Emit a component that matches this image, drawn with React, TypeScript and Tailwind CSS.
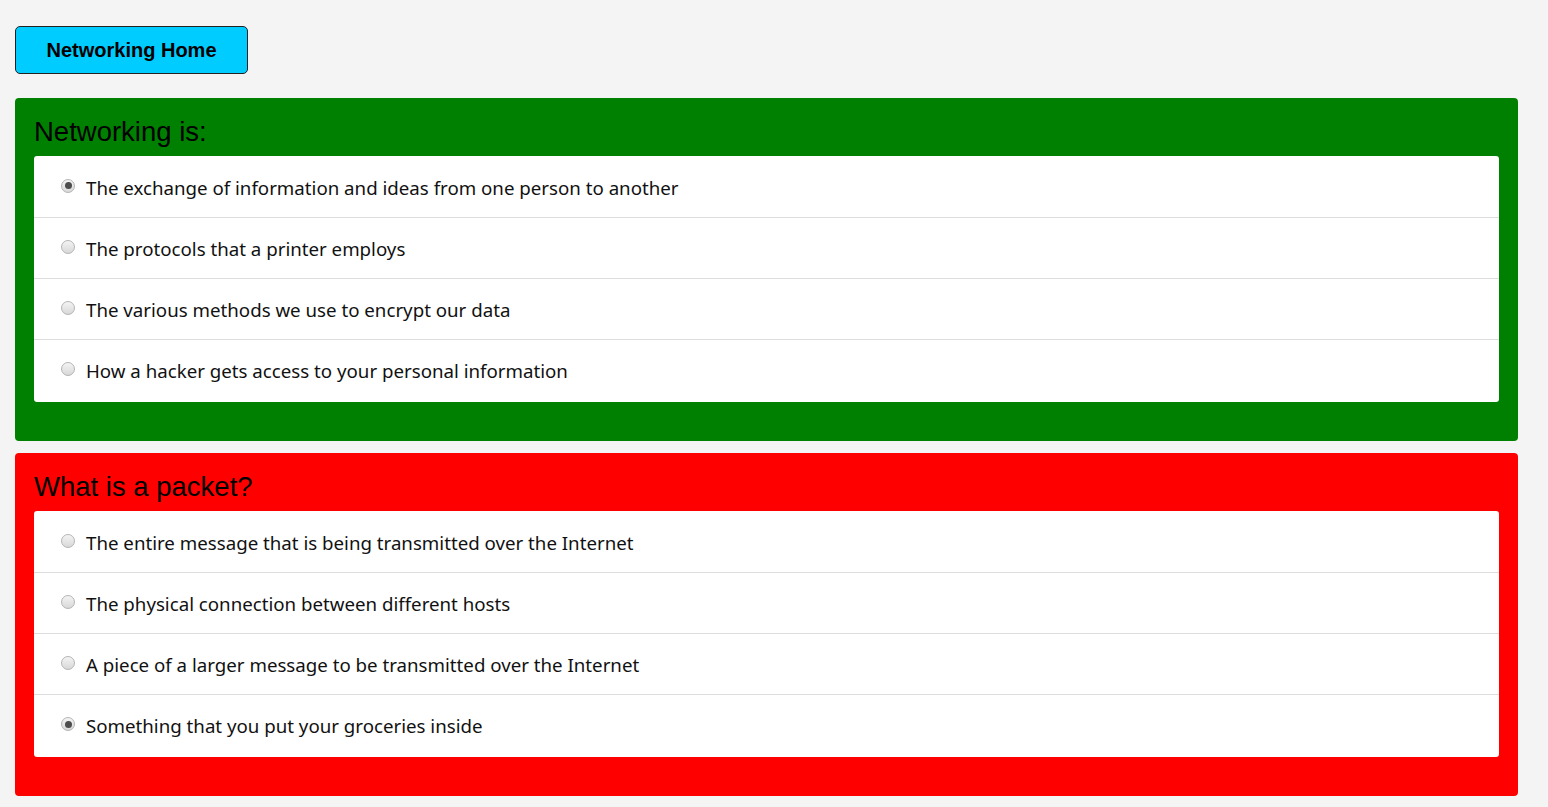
import { useState } from 'react';

interface Question {
  title: string;
  options: string[];
  selected: number;
  color: string;
}

const questions: Question[] = [
  {
    title: 'Networking is:',
    options: [
      'The exchange of information and ideas from one person to another',
      'The protocols that a printer employs',
      'The various methods we use to encrypt our data',
      'How a hacker gets access to your personal information',
    ],
    selected: 0,
    color: 'bg-[#008000]',
  },
  {
    title: 'What is a packet?',
    options: [
      'The entire message that is being transmitted over the Internet',
      'The physical connection between different hosts',
      'A piece of a larger message to be transmitted over the Internet',
      'Something that you put your groceries inside',
    ],
    selected: 3,
    color: 'bg-[#ff0000]',
  },
];

const Radio = ({ checked }: { checked: boolean }) => (
  <span className="flex h-[14px] w-[14px] shrink-0 items-center justify-center rounded-full border border-[#b4b4b4] bg-gradient-to-b from-[#f4f4f4] to-[#d8d8d8]">
    {checked && <span className="h-[7px] w-[7px] rounded-full bg-[#4d4d4d]" />}
  </span>
);

const QuestionCard = ({ q }: { q: Question }) => {
  const [sel, setSel] = useState(q.selected);
  return (
    <div className={`${q.color} rounded-[4px] px-[19px] pb-[39px]`}>
      <h2 className="flex h-[58px] items-center pt-[9px] text-[27.5px] text-black font-['Liberation_Sans',Arial,sans-serif]">
        {q.title}
      </h2>
      <ul className="rounded-[3px] bg-white pb-[2px]">
        {q.options.map((opt, i) => (
          <li
            key={opt}
            onClick={() => setSel(i)}
            className={`flex h-[61px] cursor-pointer items-center gap-[11px] pl-[27px] ${
              i > 0 ? 'border-t border-[#dddddd]' : ''
            }`}
          >
            <span className="-mt-[2px]">
              <Radio checked={sel === i} />
            </span>
            <span className="pt-[3px] text-[18.7px] text-[#111] font-['Noto_Sans',sans-serif]">{opt}</span>
          </li>
        ))}
      </ul>
    </div>
  );
};

export default function App() {
  return (
    <div className="min-h-[807px] bg-[#f4f4f4] pl-[15px] pr-[30px] pt-[26px]">
      <button className="h-[48px] w-[233px] rounded-[5px] border border-[#222] bg-[#00ccff] text-[20px] font-bold text-black font-['Liberation_Sans',Arial,sans-serif]">
        Networking Home
      </button>
      <div className="mt-[24px] flex flex-col gap-[12px]">
        {questions.map((q) => (
          <QuestionCard key={q.title} q={q} />
        ))}
      </div>
    </div>
  );
}
